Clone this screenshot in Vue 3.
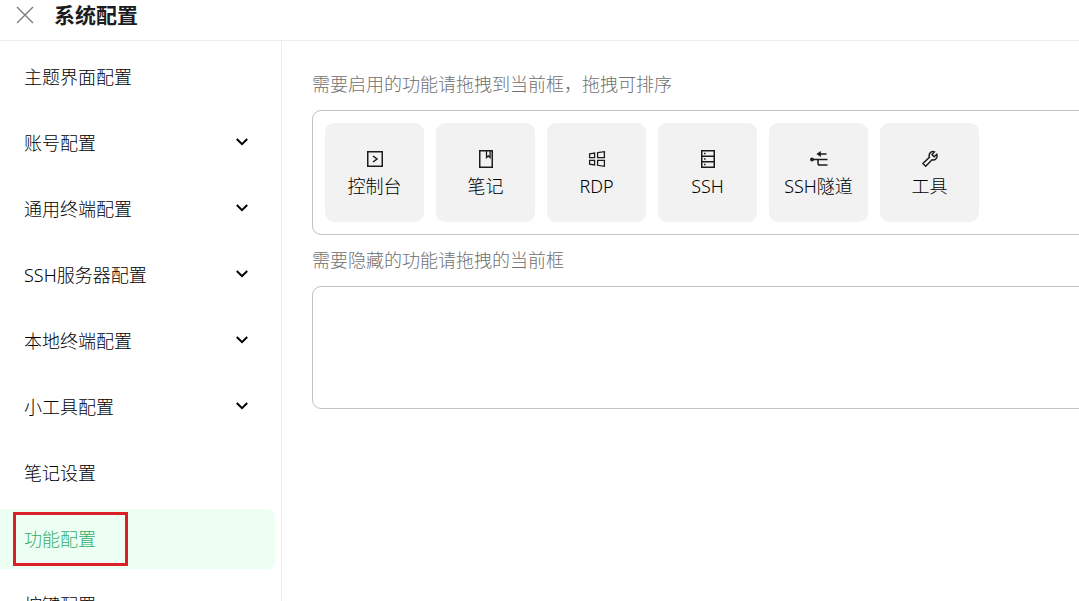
<script setup>
import { ref } from 'vue'

const menu = [
  { label: '主题界面配置' },
  { label: '账号配置', group: true },
  { label: '通用终端配置', group: true },
  { label: 'SSH服务器配置', group: true },
  { label: '本地终端配置', group: true },
  { label: '小工具配置', group: true },
  { label: '笔记设置' },
  { label: '功能配置' },
  { label: '按键配置' },
]
const current = ref('功能配置')

const enabled = [
  { label: '控制台', icon: 'console' },
  { label: '笔记', icon: 'note' },
  { label: 'RDP', icon: 'windows' },
  { label: 'SSH', icon: 'server' },
  { label: 'SSH隧道', icon: 'tunnel' },
  { label: '工具', icon: 'wrench' },
]
</script>

<template>
  <div class="page">
    <header class="header">
      <button class="close" type="button" aria-label="关闭">
        <svg width="18" height="18" viewBox="0 0 18 18"><path d="M1 1l16 16M17 1l-16 16" /></svg>
      </button>
      <h1 class="title">系统配置</h1>
    </header>
    <div class="body">
      <nav class="sidebar">
        <button
          v-for="item in menu"
          :key="item.label"
          type="button"
          class="item"
          :class="{ active: item.label === current }"
          @click="current = item.label"
        >
          <span>{{ item.label }}</span>
          <svg v-if="item.group" class="chevron" width="14" height="10" viewBox="0 0 14 10"><path d="M1.8 2l5.2 5.2L12.2 2" /></svg>
        </button>
      </nav>
      <main class="content">
        <p class="hint">需要启用的功能请拖拽到当前框，拖拽可排序</p>
        <div class="zone">
          <div v-for="card in enabled" :key="card.label" class="card" draggable="true">
            <svg class="icon" width="20" height="20" viewBox="0 0 20 20">
              <template v-if="card.icon === 'console'">
                <path d="M2.75 2.75h14.5v14.5H2.75z" />
                <path d="M8 7l4 3-4 3" />
              </template>
              <template v-else-if="card.icon === 'note'">
                <path d="M3.75 1.75h12.5v16.5H3.75z" />
                <path class="thin" d="M10.5 2v6.5l1.8-1.6 1.8 1.6V2" />
              </template>
              <template v-else-if="card.icon === 'windows'">
                <path class="thin" d="M2.6 4.8l5-.7v4.5h-5zM10.6 3.7l6.8-1v5.9h-6.8zM2.6 11.4h5v4.5l-5-.7zM10.6 11.4h6.8v5.9l-6.8-1z" />
              </template>
              <template v-else-if="card.icon === 'server'">
                <path d="M3.75 1.75h12.5v16.5H3.75zM3.75 7.25h12.5M3.75 12.75h12.5" />
                <path d="M6 4.5h1.5M6 10h1.5M6 15.5h1.5" />
              </template>
              <template v-else-if="card.icon === 'tunnel'">
                <circle class="solid" cx="3" cy="10.5" r="1.9" />
                <path class="solid" d="M7.4 5l4.4-3v6z" />
                <path d="M3 10.5h15.5M10 5h7.5M9 10.5v3.7q0 1.8 1.8 1.8h7.7" />
              </template>
              <template v-else>
                <path d="M16.8 5.3l-2.6 2.5-2.2-2.1 2.4-2.8c-2.7-1.1-5.5.8-5.3 3.8 0 .6.1 1 .3 1.5l-6.5 6.3 2.8 2.8 6.3-6.5c3 .9 6.1-1.9 4.8-5.5z" />
              </template>
            </svg>
            <span class="name">{{ card.label }}</span>
          </div>
        </div>
        <p class="hint">需要隐藏的功能请拖拽的当前框</p>
        <div class="zone empty"></div>
      </main>
    </div>
  </div>
</template>

<style>
body {
  margin: 0;
  overflow: hidden;
}
</style>

<style scoped>
.page {
  display: flex;
  flex-direction: column;
  height: 100vh;
  overflow: hidden;
  background: #fff;
  color: #000;
  font-family: "Noto Sans", "Noto Sans CJK SC", sans-serif;
  font-size: 18px;
  font-weight: 300;
  line-height: 24px;
}

svg {
  display: block;
  fill: none;
  stroke: currentColor;
}

button {
  border: 0;
  background: none;
  color: inherit;
  font: inherit;
  cursor: pointer;
}

.header {
  display: flex;
  flex: none;
  align-items: center;
  gap: 20px;
  box-sizing: border-box;
  height: 41px;
  padding: 0 16px 10px;
  border-bottom: 1px solid #ececef;
}

.close {
  padding: 0;
  color: #7c7c7e;
}

.close svg {
  stroke-width: 1.4;
}

.title {
  margin: 0;
  color: #1c1c1e;
  font-size: 21px;
  font-weight: 700;
  line-height: 30px;
}

.body {
  display: flex;
  flex: 1;
  min-height: 0;
}

.sidebar {
  display: flex;
  flex: none;
  flex-direction: column;
  gap: 6px;
  box-sizing: border-box;
  width: 282px;
  padding: 6px 6px 0 0;
  border-right: 1px solid #ececef;
  overflow: hidden;
}

.item {
  position: relative;
  display: flex;
  flex: none;
  align-items: center;
  justify-content: space-between;
  height: 60px;
  padding: 0 26px 0 24px;
  border-radius: 0 8px 8px 0;
  text-align: left;
}

.item.active {
  background: #edfef3;
  color: #36ad6a;
}

.item.active::after {
  content: "";
  position: absolute;
  top: 3px;
  left: 13px;
  box-sizing: border-box;
  width: 115px;
  height: 54px;
  border: 3px solid #dc2028;
}

.chevron {
  margin-bottom: 2px;
  stroke-width: 2;
}

.content {
  flex: 1;
  min-width: 0;
  padding: 31px 0 0 30px;
  overflow: hidden;
}

.hint {
  margin: 0 0 14px;
  color: #707070;
}

.zone {
  display: flex;
  gap: 12px;
  box-sizing: border-box;
  min-height: 123px;
  margin: 0 -12px 13px 0;
  padding: 12px;
  border: 1px solid #c2c2c4;
  border-radius: 9px;
}

.card {
  display: flex;
  flex: none;
  flex-direction: column;
  align-items: center;
  justify-content: center;
  gap: 5px;
  box-sizing: border-box;
  width: 99px;
  height: 99px;
  padding-top: 2px;
  border-radius: 9px;
  background: #f2f2f2;
  cursor: move;
}

.icon {
  color: #1c1c1e;
  stroke-width: 1.5;
}

.thin {
  stroke-width: 1.3;
}

.solid {
  fill: currentColor;
  stroke: none;
}
</style>
